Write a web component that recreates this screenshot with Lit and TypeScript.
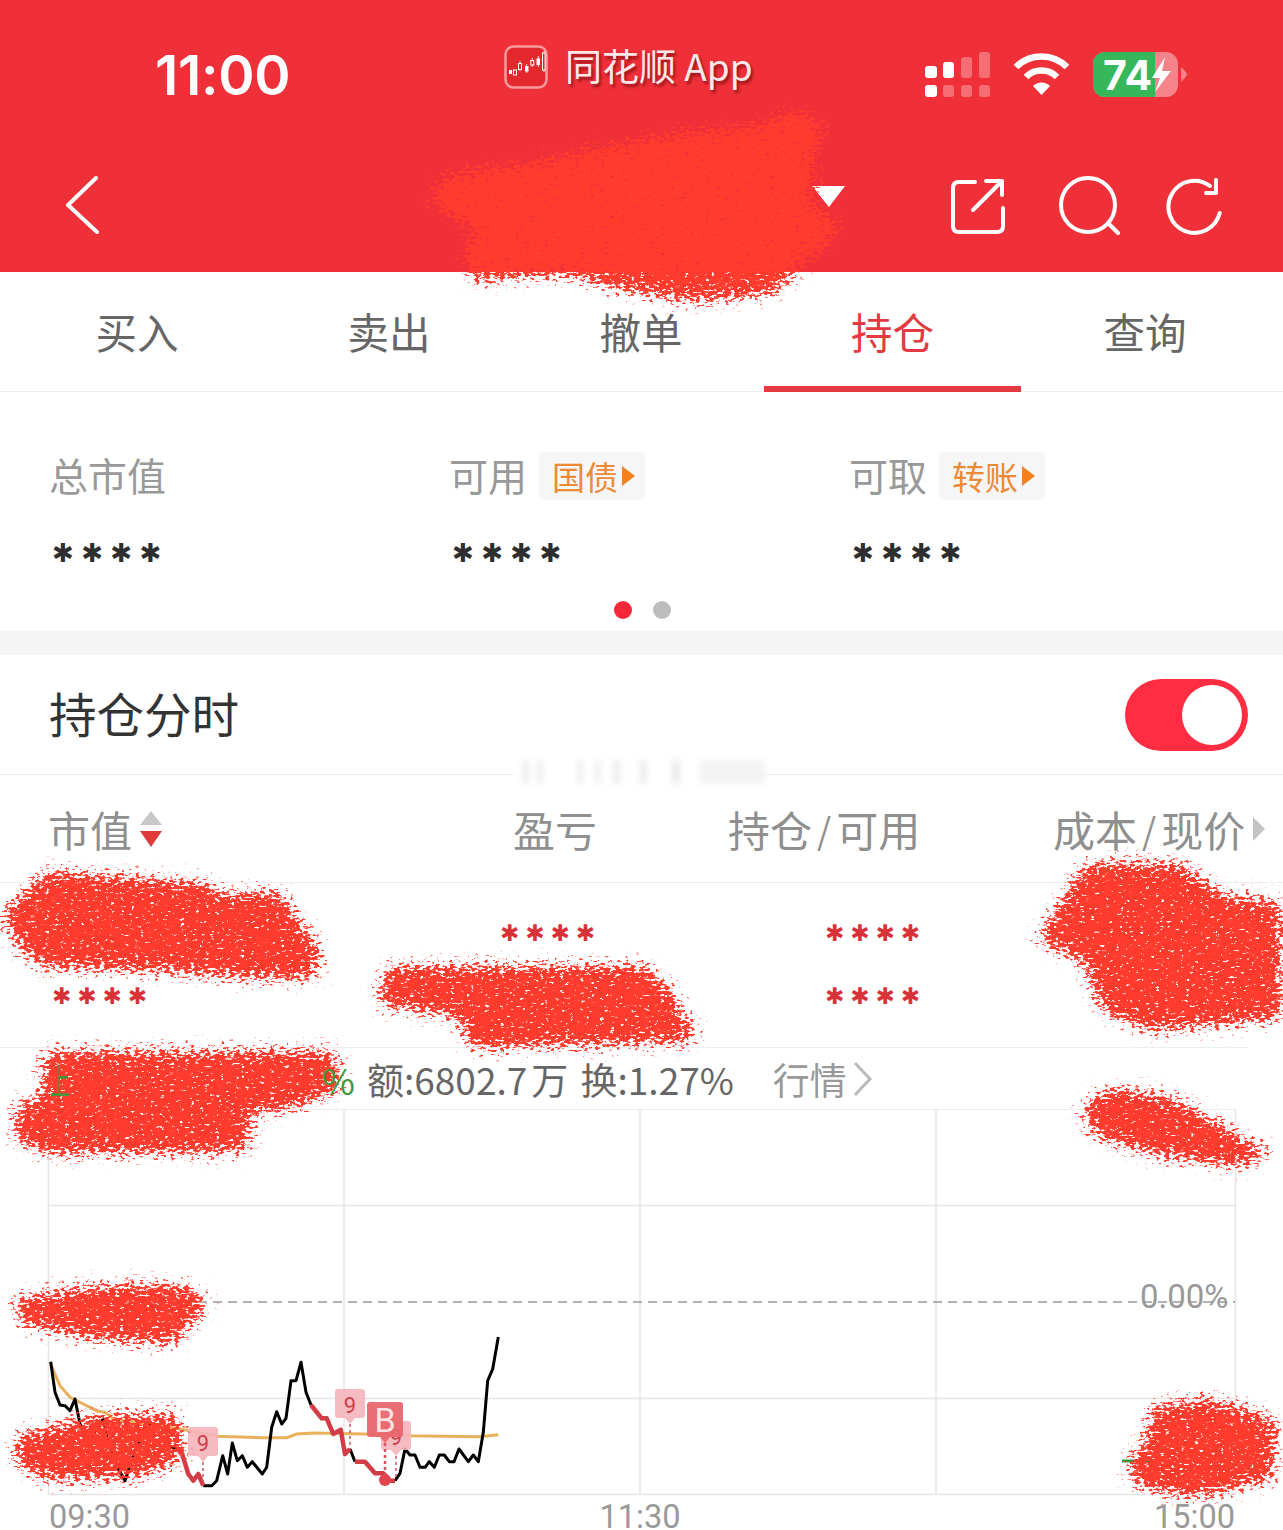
import { LitElement, css, html, svg } from "lit";
import { customElement } from "lit/decorators.js";

// points read off the 3x crop of the chart, converted to page coordinates
const toPage = (pts: number[][]) =>
  pts.map(([x, y]) => `${(x / 3 + 30).toFixed(1)},${(y / 3 + 1340).toFixed(1)}`).join(" ");

const black1 = [[62,68],[75,160],[90,198],[105,200],[120,215],[135,180],[150,255],[180,300],[220,240],[235,310],[260,380],[285,425],[310,350],[350,250],[380,270],[410,320],[440,330]];
const red1 = [[440,330],[455,340],[475,405],[490,425],[505,405],[520,440]];
const black2 = [[520,440],[545,440],[560,425],[578,350],[593,405],[607,312],[622,365],[637,350],[652,385],[667,368],[697,405],[710,385],[725,265],[740,218],[755,255],[768,238],[783,125],[798,125],[813,70],[828,160],[843,198]];
const red2 = [[843,198],[875,238],[890,238],[910,285],[932,272],[945,345],[960,330]];
const black3 = [[960,330],[975,368]];
const red3 = [[975,368],[1005,368],[1035,403],[1060,403],[1080,425],[1095,425]];
const black4 = [[1095,425],[1110,403],[1125,330],[1140,348],[1155,348],[1170,385],[1185,385],[1198,368],[1213,385],[1228,348],[1243,348],[1258,368],[1272,368],[1287,330],[1315,368],[1330,348],[1345,368],[1360,280],[1373,125],[1388,90],[1405,-6]];
const avg = [[62,75],[90,140],[120,175],[160,195],[200,215],[225,220],[250,240],[350,258],[440,268],[500,280],[560,292],[700,296],[770,296],[800,285],[850,282],[1000,285],[1130,290],[1350,293],[1405,287]];

const scrawls = [
  "M793 108L827 123L817 150L812 205L842 222L835 240L793 273L780 293L733 300L687 302L617 290L567 275L473 282L460 253L477 230L433 210L430 187L450 173L533 160L667 133L763 123Z",
  "M5 910L46 870L211 882L216 893L280 890L321 950L317 980L252 980L174 973L41 968L18 950L0 913Z",
  "M376 990L388 965L647 965L679 997L679 1013L697 1023L693 1043L468 1050L459 1017L381 1008Z",
  "M1035 940L1085 862L1180 862L1225 895L1283 900L1283 1020L1150 1032L1100 1012L1085 965Z",
  "M46 1050L337 1050L342 1090L294 1110L248 1113L255 1143L239 1153L41 1155L11 1137L18 1100L46 1097L39 1077Z",
  "M1080 1105L1110 1087L1170 1095L1215 1120L1275 1155L1240 1168L1150 1155L1090 1135Z",
  "M10 1298L100 1284L190 1284L210 1305L175 1345L90 1340L20 1325Z",
  "M15 1435L90 1415L180 1412L185 1460L140 1478L50 1482L15 1465Z",
  "M1150 1405L1215 1398L1278 1420L1275 1480L1200 1498L1140 1490L1125 1465L1145 1440Z",
];

@customElement("app-root")
export class AppRoot extends LitElement {
  static override styles = css`
    :host {
      display: block;
      position: relative;
      width: 1283px;
      height: 1530px;
      overflow: hidden;
      background: #fff;
      font-family: "Noto Sans CJK SC", "Noto Sans", sans-serif;
      color: #333;
    }

    .top {
      height: 272px;
      background: #f03038;
      color: #fff;
    }

    .status {
      height: 140px;
      display: grid;
      grid-template-columns: 504px 421px 1fr;
      align-items: start;
    }

    .clock {
      padding: 40px 0 0 155px;
      font: 600 55px/70px Inter, sans-serif;
      letter-spacing: -0.3px;
    }

    .carrier {
      display: flex;
      align-items: center;
      gap: 17px;
      padding-top: 45px;
      height: 44px;
      font-size: 37px;
      color: #fbe9ea;
      text-shadow: 2px 3px 3px rgba(90, 0, 0, 0.6);
    }

    .carrier span {
      position: relative;
      bottom: 2px;
    }

    .indicators {
      display: block;
    }

    .nav {
      height: 132px;
      display: flex;
      align-items: flex-start;
      padding-left: 60px;
    }

    .nav svg {
      display: block;
      fill: none;
      stroke: #fff;
      stroke-linecap: round;
      stroke-linejoin: round;
    }

    .back {
      margin-top: 34px;
    }

    .caret {
      margin: 46px 0 0 712px;
    }

    .tool {
      margin: 32px 0 0 0;
    }

    .tool.first {
      margin-left: 101px;
    }

    .tool.search {
      margin-left: 52px;
    }

    .tool.refresh {
      margin-left: 42px;
    }

    .tabs {
      height: 119px;
      display: grid;
      grid-template-columns: repeat(5, 252px);
      border-bottom: 1px solid #ececec;
      padding-left: 11px;
    }

    .tab {
      display: flex;
      align-items: center;
      justify-content: center;
      padding-bottom: 3px;
      font-size: 41.5px;
      color: #666;
      box-sizing: border-box;
      height: 120px;
    }

    .tab.active {
      margin: 0 -2px 0 -3px;
      padding-top: 3px;
      padding-bottom: 0;
      color: #e23a40;
      border-bottom: 6px solid #e23a40;
    }

    .summary {
      height: 239px;
      box-sizing: border-box;
      padding-top: 54px;
    }

    .cells {
      display: grid;
      grid-template-columns: repeat(3, 400px);
      padding-left: 49px;
    }

    .label {
      display: flex;
      align-items: center;
      gap: 12px;
      height: 56px;
      font-size: 39px;
      color: #999;
    }

    .chip {
      display: flex;
      align-items: center;
      gap: 4px;
      height: 48px;
      margin-top: 4px;
      padding: 0 10px 0 13px;
      border-radius: 5px;
      background: #f6f6f6;
      font-size: 33px;
      color: #ec8a36;
    }

    .chip i {
      width: 0;
      height: 0;
      border-left: 13px solid #f5811f;
      border-top: 10px solid transparent;
      border-bottom: 10px solid transparent;
    }

    .stars {
      font-family: "DejaVu Sans", sans-serif;
      font-size: 26px;
      line-height: 30px;
      letter-spacing: 7.4px;
      color: #2e2e2e;
      white-space: nowrap;
    }

    .summary .stars {
      margin: 36px 0 0 3px;
    }

    .dots {
      display: flex;
      justify-content: center;
      gap: 21px;
      margin-top: 33px;
      padding-left: 2px;
    }

    .dots i {
      width: 18px;
      height: 18px;
      border-radius: 50%;
      background: #bdbdbd;
    }

    .dots i.on {
      background: #f5283a;
    }

    .gap {
      height: 24px;
      background: #f5f5f5;
    }

    .switch-row {
      height: 120px;
      box-sizing: border-box;
      display: flex;
      align-items: center;
      justify-content: space-between;
      padding: 0 35px 4px 49px;
      border-bottom: 1px solid #eee;
      font-size: 47.5px;
      color: #333;
    }

    .switch {
      display: flex;
      align-items: center;
      justify-content: flex-end;
      width: 123px;
      height: 72px;
      box-sizing: border-box;
      margin-top: 4px;
      padding-right: 6px;
      border-radius: 36px;
      background: #ff2d42;
    }

    .switch i {
      width: 60px;
      height: 60px;
      border-radius: 50%;
      background: #fff;
    }

    .head {
      height: 108px;
      box-sizing: border-box;
      display: grid;
      grid-template-columns: 465px 215px 325px 1fr;
      align-items: center;
      padding: 0 0 0 48px;
      border-bottom: 1px solid #eee;
      font-size: 42px;
      color: #8f8f8f;
    }

    .head div {
      display: flex;
      align-items: center;
      white-space: nowrap;
    }

    .slash {
      margin: 0 5px;
      font-size: 36px;
    }

    .sort {
      display: flex;
      flex-direction: column;
      gap: 6px;
      margin-left: 8px;
    }

    .sort i {
      width: 0;
      height: 0;
      border-left: 11px solid transparent;
      border-right: 11px solid transparent;
    }

    .sort .up {
      border-bottom: 14px solid #c8c8c8;
    }

    .sort .down {
      border-top: 16px solid #e23a3a;
    }

    .more {
      width: 0;
      height: 0;
      margin-left: 8px;
      border-left: 12px solid #c4c4c4;
      border-top: 12px solid transparent;
      border-bottom: 12px solid transparent;
    }

    .holding {
      height: 165px;
      box-sizing: border-box;
      margin-right: 35px;
      padding: 18px 0 0 52px;
      border-bottom: 1px solid #eee;
      display: grid;
      grid-template-columns: 448px 325px 1fr;
      grid-auto-rows: 63px;
      align-items: center;
    }

    .holding .stars {
      color: #d83238;
      font-size: 23px;
      letter-spacing: 6px;
    }

    .quote {
      height: 61px;
      display: flex;
      align-items: center;
      padding-left: 50px;
      font-size: 37px;
      color: #666;
    }

    .quote .up {
      position: relative;
      z-index: 1;
      color: #3f9a3a;
      width: 305px;
      display: flex;
      justify-content: space-between;
      font-size: 36px;
    }

    .quote .narrow {
      transform: scaleX(0.55);
      transform-origin: left center;
    }

    .quote .metric {
      margin-left: 12px;
      word-spacing: 4px;
    }

    .quote .unit {
      margin-left: 4px;
    }

    .quote .link {
      margin-left: 39px;
      color: #999;
    }

    .quote svg {
      margin-left: 6px;
      fill: none;
      stroke: #bbb;
      stroke-width: 3;
    }

    .chart {
      display: block;
      font-family: Roboto, sans-serif;
    }

    .scrawls {
      position: absolute;
      left: 0;
      top: 0;
      pointer-events: none;
    }

    .smudge {
      position: absolute;
      left: 515px;
      top: 760px;
      width: 250px;
      height: 24px;
      background: linear-gradient(
        90deg,
        #fff 0 8px,
        #ececec 8px 14px,
        #fff 14px 22px,
        #ececec 22px 28px,
        #fff 28px 62px,
        #efefef 62px 68px,
        #fff 68px 80px,
        #efefef 80px 86px,
        #fff 86px 98px,
        #ececec 98px 105px,
        #fff 105px 125px,
        #ececec 125px 132px,
        #fff 132px 157px,
        #eaeaea 157px 165px,
        #fff 165px 185px,
        #f3f3f3 185px 250px
      );
      filter: blur(3px);
    }
  `;

  private renderChart() {
    return html`<svg class="chart" width="1283" height="420" viewBox="0 1110 1283 420">
      <g stroke="#e6e6e6" stroke-width="1.5" fill="none">
        <rect x="48.5" y="1110" width="1187" height="385.5"></rect>
        <path d="M344 1110V1495M640 1110V1495M936 1110V1495M48 1206.5H1235M48 1399.5H1235"></path>
      </g>
      <path d="M48 1303H1235" stroke="#999" stroke-width="1.5" stroke-dasharray="9 6" fill="none"></path>
      <text x="1140" y="1309" font-size="33" fill="#999">0.00%</text>
      <path d="M1122 1462H1150" stroke="#2e9b3a" stroke-width="3"></path>
      <polyline points=${toPage(avg)} fill="none" stroke="#eab15c" stroke-width="3"></polyline>
      <g fill="none" stroke="#000" stroke-width="3" stroke-linejoin="round">
        <polyline points=${toPage(black1)}></polyline>
        <polyline points=${toPage(black2)}></polyline>
        <polyline points=${toPage(black3)}></polyline>
        <polyline points=${toPage(black4)}></polyline>
      </g>
      <g fill="none" stroke="#d23c46" stroke-width="4.5" stroke-linejoin="round">
        <polyline points=${toPage(red1)}></polyline>
        <polyline points=${toPage(red2)}></polyline>
        <polyline points=${toPage(red3)}></polyline>
      </g>
      <circle cx="385" cy="1481" r="6" fill="#e0454f"></circle>
      ${this.flag(203, 1428, 1486)} ${this.flag(350, 1390, 1450)} ${this.flag(396, 1422, 1480)}
      <g>
        <path d="M370 1403H400Q403 1403 403 1406V1435Q403 1438 400 1438H390L385 1444L380 1438H370Q367 1438 367 1435V1406Q367 1403 370 1403Z" fill="#e9666e" fill-opacity="0.95"></path>
        <text x="385" y="1433" font-size="34" text-anchor="middle" fill="#fbe4e5">B</text>
        <path d="M385 1444V1476" stroke="#d5555e" stroke-width="2.5" stroke-dasharray="3 3"></path>
      </g>
      <g font-size="32.5" fill="#999">
        <text x="49" y="1529">09:30</text>
        <text x="640" y="1529" text-anchor="middle">11:30</text>
        <text x="1235" y="1529" text-anchor="end">15:00</text>
      </g>
    </svg>`;
  }

  private flag(x: number, top: number, end: number) {
    return svg`<g>
      <path d="M${x - 12} ${top}H${x + 12}Q${x + 15} ${top} ${x + 15} ${top + 3}V${top + 26}Q${x + 15} ${top + 29} ${x + 12} ${top + 29}H${x + 5}L${x} ${top + 35}L${x - 5} ${top + 29}H${x - 12}Q${x - 15} ${top + 29} ${x - 15} ${top + 26}V${top + 3}Q${x - 15} ${top} ${x - 12} ${top}Z" fill="#f5b4b9" fill-opacity="0.9"></path>
      <text x=${x} y=${top + 24} font-size="22" text-anchor="middle" fill="#cf3f4a">9</text>
      <path d="M${x} ${top + 35}V${end}" stroke="#c75560" stroke-width="1.5" stroke-dasharray="3 3"></path>
    </g>`;
  }

  override render() {
    return html`
      <div class="top">
        <div class="status">
          <div class="clock">11:00</div>
          <div class="carrier">
            <svg width="44" height="44" viewBox="0 0 44 44">
              <rect x="1.5" y="1.5" width="41" height="41" rx="8" fill="#e3282e" stroke="#f79a9d" stroke-width="2.5"></rect>
              <path d="M16 16V26M22.7 19V28M28.3 13V22M34.3 11V22M40 6V27" stroke="#fff" stroke-width="0.8" fill="none"></path>
              <rect x="5" y="25" width="3" height="4" fill="#fff"></rect>
              <rect x="21" y="21" width="3.5" height="5.5" fill="#fff"></rect>
              <rect x="32.5" y="13.5" width="3.5" height="6.5" fill="#fff"></rect>
              <g fill="#e3282e" stroke="#fff" stroke-width="1">
                <rect x="9.5" y="25" width="3" height="5"></rect>
                <rect x="14.5" y="18.5" width="3" height="6"></rect>
                <rect x="26.8" y="15.5" width="3" height="4.5"></rect>
                <rect x="38.5" y="8" width="2.6" height="17"></rect>
              </g>
            </svg>
            <span>同花顺 App</span>
          </div>
          <svg class="indicators" width="358" height="140" viewBox="925 0 358 140">
            <g fill="#fff">
              <rect x="925" y="66" width="12" height="12" rx="3"></rect>
              <rect x="943" y="62" width="11" height="16" rx="3"></rect>
              <rect x="925" y="85" width="12" height="12" rx="3"></rect>
            </g>
            <g fill="#fff" fill-opacity="0.3">
              <rect x="961" y="57" width="11" height="21" rx="3"></rect>
              <rect x="979" y="52" width="11" height="26" rx="3"></rect>
              <rect x="943" y="85" width="11" height="12" rx="3"></rect>
              <rect x="961" y="85" width="11" height="12" rx="3"></rect>
              <rect x="979" y="85" width="11" height="12" rx="3"></rect>
            </g>
            <g fill="none" stroke="#fff" stroke-width="6.5">
              <path d="M1016 67A36 36 0 0 1 1067 67"></path>
              <path d="M1026 77A22 22 0 0 1 1057 77"></path>
            </g>
            <path d="M1033 86A12 12 0 0 1 1050 86L1041.5 95Z" fill="#fff"></path>
            <rect x="1093" y="52" width="85" height="45" rx="12" fill="#f5838a"></rect>
            <path d="M1105 52H1155V97H1105A12 12 0 0 1 1093 85V64A12 12 0 0 1 1105 52Z" fill="#36b85a"></path>
            <path d="M1181 67Q1187 73 1187 74Q1187 76 1181 82Z" fill="#f5838a"></path>
            <text x="1103" y="90" font-family="Inter, sans-serif" font-weight="700" font-size="41" fill="#fff">74</text>
            <path d="M1165 57L1152 78H1160L1155 92L1171 71H1162Z" fill="#fff"></path>
          </svg>
        </div>
        <div class="nav">
          <svg class="back" width="40" height="60" viewBox="0 0 40 60" stroke-width="4">
            <path d="M36 4L8 31L37 58"></path>
          </svg>
          <svg class="caret" width="33" height="21" viewBox="0 0 33 21"><path d="M0 0H33L17 21Z" style="fill:#fff;stroke:none"></path></svg>
          <svg class="tool first" width="60" height="62" viewBox="0 0 60 62" stroke-width="4">
            <path d="M29 10H13Q7 10 7 16V54Q7 60 13 60H51Q57 60 57 54V36"></path>
            <path d="M27 38L55 10M40 9H56V23"></path>
          </svg>
          <svg class="tool search" width="62" height="66" viewBox="0 0 62 66" stroke-width="4">
            <circle cx="30" cy="33" r="27"></circle>
            <path d="M50 51L60 61"></path>
          </svg>
          <svg class="tool refresh" width="60" height="66" viewBox="0 0 60 66" stroke-width="4">
            <path d="M48 14A26 26 0 1 0 57.7 41"></path>
            <path d="M44 21H54V8"></path>
          </svg>
        </div>
      </div>

      <div class="tabs">
        <div class="tab">买入</div>
        <div class="tab">卖出</div>
        <div class="tab">撤单</div>
        <div class="tab active">持仓</div>
        <div class="tab">查询</div>
      </div>

      <div class="summary">
        <div class="cells">
          <div>
            <div class="label">总市值</div>
            <div class="stars">✱✱✱✱</div>
          </div>
          <div>
            <div class="label">可用<span class="chip">国债<i></i></span></div>
            <div class="stars">✱✱✱✱</div>
          </div>
          <div>
            <div class="label">可取<span class="chip">转账<i></i></span></div>
            <div class="stars">✱✱✱✱</div>
          </div>
        </div>
        <div class="dots"><i class="on"></i><i></i></div>
      </div>
      <div class="gap"></div>

      <div class="switch-row">
        <span>持仓分时</span>
        <div class="switch"><i></i></div>
      </div>

      <div class="head">
        <div>市值<span class="sort"><i class="up"></i><i class="down"></i></span></div>
        <div>盈亏</div>
        <div>持仓<span class="slash">/</span>可用</div>
        <div>成本<span class="slash">/</span>现价<i class="more"></i></div>
      </div>

      <div class="holding">
        <div></div>
        <div class="stars">✱✱✱✱</div>
        <div class="stars">✱✱✱✱</div>
        <div class="stars">✱✱✱✱</div>
        <div></div>
        <div class="stars">✱✱✱✱</div>
      </div>

      <div class="quote">
        <span class="up"><span class="narrow">上</span><span>%</span></span>
        <span class="metric">额:6802.7<span class="unit">万</span> 换:1.27%</span>
        <span class="link">行情</span>
        <svg width="20" height="36" viewBox="0 0 20 36"><path d="M2 2L17 18L2 34"></path></svg>
      </div>

      ${this.renderChart()}

      <div class="smudge"></div>
      <svg class="scrawls" width="1283" height="1530" viewBox="0 0 1283 1530">
        <defs>
          <filter id="rough" filterUnits="userSpaceOnUse" x="0" y="0" width="1283" height="1530">
            <feGaussianBlur in="SourceAlpha" stdDeviation="9" result="soft"></feGaussianBlur>
            <feTurbulence type="fractalNoise" baseFrequency="0.2 0.38" numOctaves="3" seed="7"></feTurbulence>
            <feColorMatrix type="matrix" values="0 0 0 0 0  0 0 0 0 0  0 0 0 0 0  0 0 0 1.8 -0.4" result="grain"></feColorMatrix>
            <feComposite in="soft" in2="grain" operator="arithmetic" k1="0" k2="1" k3="1" k4="-1" result="mix"></feComposite>
            <feColorMatrix in="mix" type="matrix" values="0 0 0 0 0  0 0 0 0 0  0 0 0 0 0  0 0 0 5 0" result="mask"></feColorMatrix>
            <feFlood flood-color="#ff3b2f"></feFlood>
            <feComposite in2="mask" operator="in"></feComposite>
          </filter>
        </defs>
        <g fill="#000" filter="url(#rough)">
          ${scrawls.map((d) => svg`<path d=${d}></path>`)}
        </g>
      </svg>
    `;
  }
}

declare global {
  interface HTMLElementTagNameMap {
    "app-root": AppRoot;
  }
}
